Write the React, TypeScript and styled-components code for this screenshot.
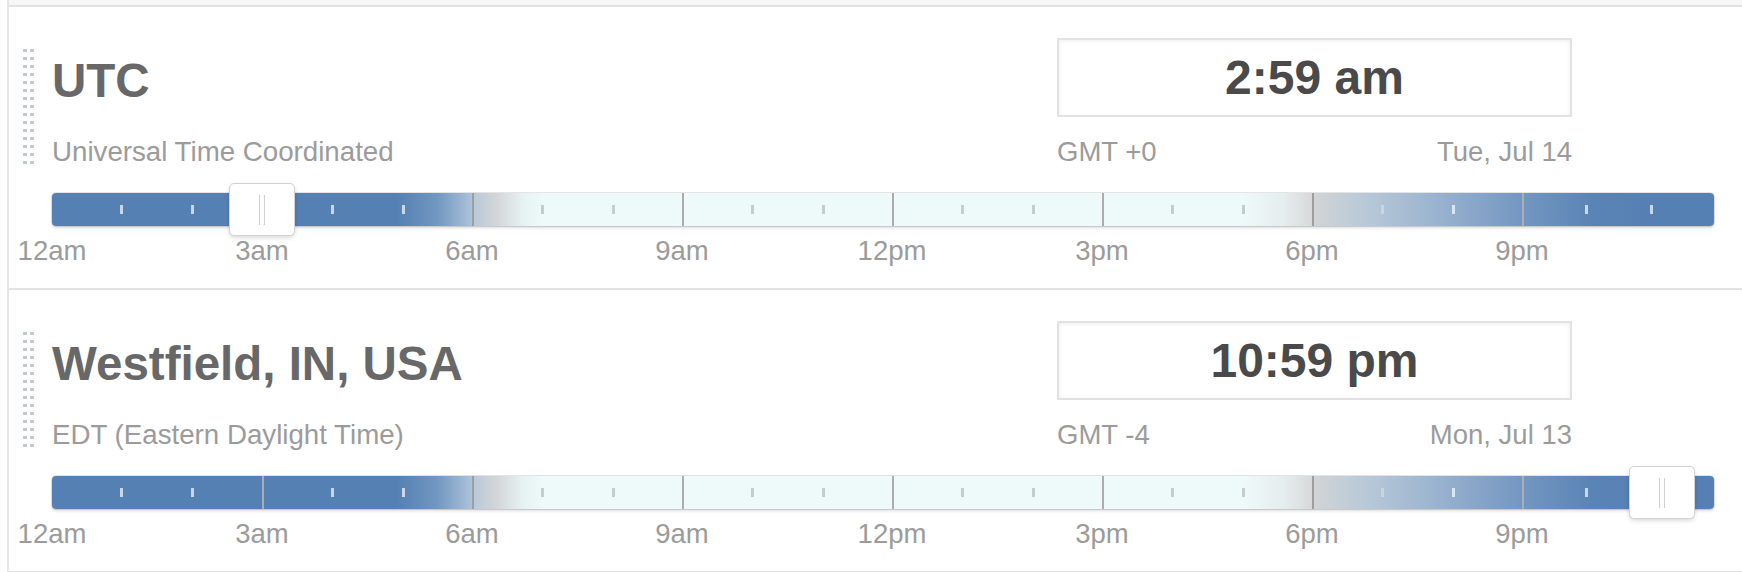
import React from 'react';
import styled, { createGlobalStyle } from 'styled-components';

const GlobalStyle = createGlobalStyle`
  html, body {
    margin: 0;
    padding: 0;
    background: #ffffff;
  }
  body {
    font-family: "Liberation Sans", Arial, Helvetica, sans-serif;
  }
`;

const SEGMENT = 210;
const HOUR_LABELS = ['12am', '3am', '6am', '9am', '12pm', '3pm', '6pm', '9pm'];

// tick look per hour: night ticks are light, day ticks are grey
const tickTone = (hour: number): 'light' | 'faint' | 'dark' => {
  if (hour === 19) return 'faint';
  if (hour <= 5 || hour >= 20) return 'light';
  return 'dark';
};

// dawn and dusk dividers are drawn a bit darker
const dividerTone = (i: number) => (i === 2 || i === 6 ? '#9c9fa2' : '#a9adb1');

const zones = [
  {
    name: 'UTC',
    desc: 'Universal Time Coordinated',
    time: '2:59 am',
    offset: 'GMT +0',
    date: 'Tue, Jul 14',
    thumbAt: 210,
  },
  {
    name: 'Westfield, IN, USA',
    desc: 'EDT (Eastern Daylight Time)',
    time: '10:59 pm',
    offset: 'GMT -4',
    date: 'Mon, Jul 13',
    thumbAt: 1610,
  },
];

const Page = styled.div`
  padding-left: 7px;
`;

const List = styled.div`
  border-left: 2px solid #e6e6e6;
`;

const PrevEdge = styled.div`
  height: 5px;
  background: #f7f7f7;
  border-bottom: 2px solid #e3e3e3;
`;

const Row = styled.div`
  display: flex;
  padding: 31px 28px 21px 14px;
  border-bottom: 2px solid #e3e3e3;
`;

const Handle = styled.div`
  flex: none;
  width: 11px;
  height: 120px;
  margin-top: 11px;
  margin-right: 18px;
  background-image:
    linear-gradient(#c3c8ce 3px, transparent 3px),
    linear-gradient(#c3c8ce 3px, transparent 3px);
  background-size: 4px 8px, 4px 8px;
  background-position: 0 0, 7px 0;
  background-repeat: repeat-y, repeat-y;
`;

const Content = styled.div`
  flex: 1;
  min-width: 0;
`;

const TopSection = styled.div`
  display: flex;
`;

const Info = styled.div`
  flex: 1;
  padding-top: 16px;
`;

const Title = styled.div`
  font-size: 47.5px;
  line-height: 54px;
  font-weight: 700;
  color: #686868;
  white-space: nowrap;
`;

const Subtitle = styled.div`
  margin-top: 28px;
  font-size: 27.7px;
  line-height: 32px;
  color: #9b9b9b;
  white-space: nowrap;
`;

const Clock = styled.div`
  flex: none;
  width: 515px;
  margin-right: 142px;
`;

const TimeBox = styled.div`
  box-sizing: border-box;
  height: 79px;
  display: flex;
  align-items: center;
  justify-content: center;
  border: 2px solid #e2e2e2;
  box-shadow: inset 0 1px 4px rgba(0, 0, 0, 0.07);
  font-size: 48px;
  font-weight: 700;
  color: #4a4a4a;
`;

const Meta = styled.div`
  margin-top: 19px;
  display: flex;
  justify-content: space-between;
  font-size: 27.5px;
  line-height: 32px;
  color: #9b9b9b;
`;

const Bar = styled.div`
  position: relative;
  margin-top: 25px;
  height: 33px;
  display: flex;
  border-radius: 4px;
  box-shadow: 0 0 0 1px rgba(0, 0, 0, 0.1), 0 2px 3px rgba(0, 0, 0, 0.14);
  background: linear-gradient(
    to right,
    #5580b3 0px,
    #5580b3 345px,
    #7197c1 385px,
    #a9c0d8 418px,
    #bac9d8 422px,
    #d3d6d9 445px,
    #e7f3f3 472px,
    #eefaf9 492px,
    #eefaf9 1190px,
    #e5eded 1232px,
    #d8dadb 1258px,
    #d2d4d6 1262px,
    #bccbd9 1305px,
    #9fb7d1 1372px,
    #7698c2 1465px,
    #5a84b5 1540px,
    #5580b3 1600px,
    #5580b3 100%
  );
`;

const Segment = styled.div<{ $first: boolean; $last: boolean; $divider: string }>`
  box-sizing: border-box;
  flex: ${p => (p.$last ? '1 1 auto' : `0 0 ${SEGMENT}px`)};
  display: flex;
  align-items: center;
  justify-content: space-evenly;
  border-left: ${p => (p.$first ? 'none' : `2px solid ${p.$divider}`)};
`;

const Tick = styled.span<{ $tone: 'light' | 'faint' | 'dark' }>`
  width: 3px;
  height: 9px;
  background: ${p =>
    p.$tone === 'light'
      ? 'rgba(255, 255, 255, 0.68)'
      : p.$tone === 'faint'
      ? 'rgba(255, 255, 255, 0.3)'
      : 'rgba(0, 0, 0, 0.18)'};
`;

const Thumb = styled.div`
  position: absolute;
  top: -10px;
  box-sizing: border-box;
  width: 66px;
  height: 53px;
  margin-left: -33px;
  background: #ffffff;
  border: 1px solid #d2d2d2;
  border-radius: 5px;
  box-shadow: 0 2px 4px rgba(0, 0, 0, 0.14);

  &::after {
    content: '';
    position: absolute;
    left: 50%;
    top: 11px;
    box-sizing: border-box;
    width: 6px;
    height: 30px;
    margin-left: -3px;
    border-left: 1px solid #d0d0d0;
    border-right: 1px solid #d0d0d0;
  }
`;

const Labels = styled.div`
  display: flex;
  margin-top: 9px;
  margin-left: -${SEGMENT / 2}px;
`;

const Label = styled.div`
  flex: 0 0 ${SEGMENT}px;
  text-align: center;
  font-size: 27.5px;
  line-height: 32px;
  color: #9b9b9b;
`;

type Zone = (typeof zones)[number];

const TimeBar: React.FC<{ thumbAt: number }> = ({ thumbAt }) => (
  <Bar>
    {HOUR_LABELS.map((_, i) => (
      <Segment
        key={i}
        $first={i === 0}
        $last={i === HOUR_LABELS.length - 1}
        $divider={dividerTone(i)}
      >
        <Tick $tone={tickTone(i * 3 + 1)} />
        <Tick $tone={tickTone(i * 3 + 2)} />
      </Segment>
    ))}
    <Thumb style={{ left: thumbAt }} />
  </Bar>
);

const ZoneRow: React.FC<{ zone: Zone }> = ({ zone }) => (
  <Row>
    <Handle />
    <Content>
      <TopSection>
        <Info>
          <Title>{zone.name}</Title>
          <Subtitle>{zone.desc}</Subtitle>
        </Info>
        <Clock>
          <TimeBox>{zone.time}</TimeBox>
          <Meta>
            <span>{zone.offset}</span>
            <span>{zone.date}</span>
          </Meta>
        </Clock>
      </TopSection>
      <TimeBar thumbAt={zone.thumbAt} />
      <Labels>
        {HOUR_LABELS.map(l => (
          <Label key={l}>{l}</Label>
        ))}
      </Labels>
    </Content>
  </Row>
);

export default function App() {
  return (
    <>
      <GlobalStyle />
      <Page>
        <List>
          <PrevEdge />
          {zones.map(z => (
            <ZoneRow key={z.name} zone={z} />
          ))}
        </List>
      </Page>
    </>
  );
}
